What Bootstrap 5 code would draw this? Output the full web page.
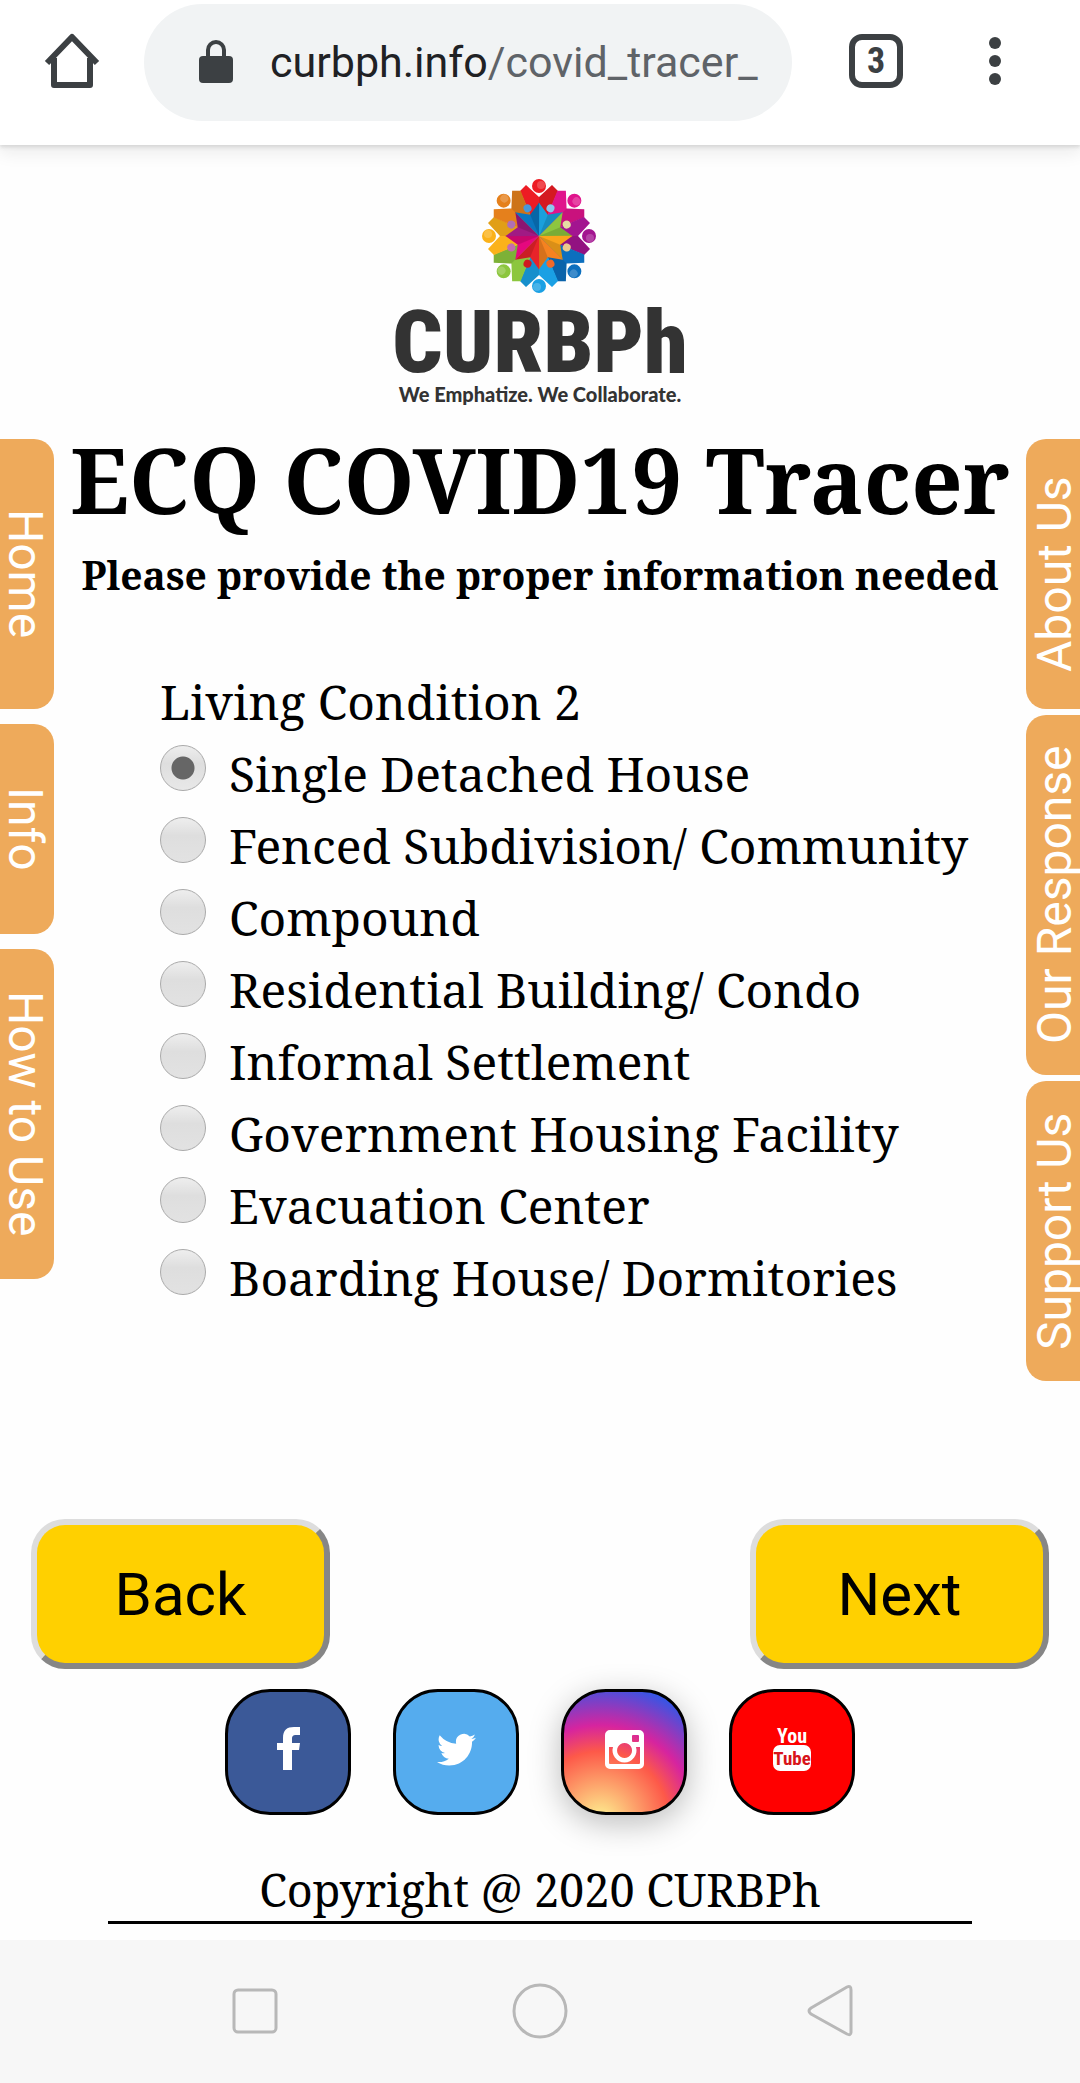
<!DOCTYPE html>
<html lang="en">
<head>
<meta charset="utf-8">
<meta name="viewport" content="width=device-width, initial-scale=1">
<title>ECQ COVID19 Tracer</title>
<link href="https://cdn.jsdelivr.net/npm/bootstrap@5.3.0/dist/css/bootstrap.min.css" rel="stylesheet">
<style>
  body { font-family: "Noto Serif", "DejaVu Serif Condensed", "DejaVu Serif", serif; color: #000; background: #fefefe; }
  .browser-bar { height: 145px; padding: 0 78px 24px 40px; background: #fff; box-shadow: 0 2px 4px #d4d4d4, 0 8px 16px #ececec; font-family: Roboto, sans-serif; }
  .address { height: 117px; margin: 4px 57px 0 40px; padding: 0 24px 0 50px; border-radius: 60px; background: #f1f3f4; font-size: 43px; }
  .address svg { margin-right: 32px; }
  .address .host { color: #202124; text-decoration: none; }
  .address .path { color: #5f6368; }
  .icon-btn { border: 0; padding: 0; background: none; line-height: 0; }
  .tab-count { width: 54px; height: 54px; border: 6px solid #3c4043; border-radius: 13px; background: none; color: #3c4043; font: 700 36px/40px "Roboto Condensed", Roboto, sans-serif; padding: 0; margin-right: 85px; }
  .brand { height: 292px; padding-top: 33px; color: #333; }
  .brand-name { font: 900 88px/76px "Roboto Condensed", Roboto, sans-serif; margin-top: 10px; }
  .brand-line { font: 900 20px/24px Lato, sans-serif; margin-top: 2px; }
  .side-tabs { margin-top: 2px; }
  .side-tabs a { width: 54px; writing-mode: vertical-rl; background: #eeaa5b; color: #fff; font: 48px/58px Roboto, sans-serif; border-radius: 0 20px 20px 0; text-decoration: none; }
  .side-tabs.at-right a { transform: rotate(180deg); }
  .tab-s { height: 210px; } .tab-m { height: 270px; } .tab-l { height: 300px; } .tab-xl { height: 330px; } .tab-xxl { height: 360px; }
  .gap-wide { gap: 15px; } .gap-slim { gap: 6px; }
  h1 { font-size: 90px; font-weight: 700; line-height: 84px; white-space: nowrap; }
  h2 { font-size: 39px; font-weight: 700; line-height: 48px; margin-top: 30px; white-space: nowrap; }
  .choices { margin: 67px 0 0 106px; font-size: 48px; line-height: 72px; white-space: nowrap; }
  .choices legend { font-size: 48px; line-height: 72px; }
  .choice input { width: 46px; height: 46px; margin: 7px 23px 0 0; appearance: none; border: 1px solid #aaa; border-radius: 50%; background: linear-gradient(#eee, #dedede 40%, #e2e2e2); }
  .choice input:checked { background: radial-gradient(circle, #666 11px, transparent 12px), linear-gradient(#eee, #dedede 40%, #e8e8e8); }
  .steps { margin: 138px 31px 20px; }
  .steps button { width: 299px; height: 150px; padding-top: 3px; border: 6px solid; border-color: #ddd #868686 #868686 #ddd; border-radius: 34px; background: #ffd000; color: #000; font: 60px/72px Roboto, sans-serif; }
  .socials { gap: 42px; }
  .socials a { width: 126px; height: 126px; padding-bottom: 8px; border: 3px solid #000; border-radius: 45px; }
  .facebook { background: #3b5998; } .twitter { background: #55acee; } .youtube { background: #f00; }
  .instagram { background: radial-gradient(circle at 30% 107%, #fde48a 0%, #fde48a 5%, #fd5949 45%, #d6249f 62%, #285aeb 92%); box-shadow: 0 8px 32px #bbb; }
  footer { margin: 46px 10% 0; height: 63px; border-bottom: 3px solid #000; font-size: 45px; line-height: 57px; }
  .phone-bar { height: 143px; margin-top: 16px; background: #f7f7f7; padding: 0 224px; }
</style>
</head>
<body>
<header class="browser-bar d-flex align-items-center position-relative">
  <button class="icon-btn" aria-label="Home"><svg width="64" height="64" viewBox="0 0 64 64" fill="none" stroke="#3c4043" stroke-width="6" stroke-linejoin="round"><path d="M7 34 32 8l25 26M14 29v27h36V29"/></svg></button>
  <div class="address flex-grow-1 d-flex align-items-center">
    <svg width="44" height="48" viewBox="0 0 44 48"><rect x="5" y="17" width="34" height="27" rx="4" fill="#3c4043"/><path d="M14 18v-7a8 8 0 0 1 16 0v7" fill="none" stroke="#3c4043" stroke-width="4"/></svg>
    <a class="host" href="#">curbph.info<span class="path">/covid_tracer_</span></a>
  </div>
  <button class="tab-count" aria-label="Open tabs">3</button>
  <button class="icon-btn" aria-label="Menu"><svg width="14" height="50" viewBox="0 0 14 50" fill="#3c4043"><circle cx="7" cy="7" r="6"/><circle cx="7" cy="25" r="6"/><circle cx="7" cy="43" r="6"/></svg></button>
</header>

<div class="brand d-flex flex-column align-items-center">
  <svg width="116" height="116" viewBox="-57 -58 116 116" role="img" aria-label="CURBPh emblem">
    <defs>
      <g id="outer"><path d="M0 0-19-45-13-51 0-39 13-51 19-45Z"/><path d="M0 0V-39L13-51 19-45Z" fill="#000" opacity=".1"/><circle cy="-50" r="7"/><circle cx="2" cy="-51" r="4" fill="#fff" opacity=".2"/></g>
      <g id="inner"><path d="M0 0-13-31 0-23 13-31Z"/><path d="M0 0V-23L13-31Z" fill="#000" opacity=".13"/></g>
    </defs>
    <use href="#outer" fill="#ed1c24"/>
    <use href="#outer" fill="#e0148c" transform="rotate(45)"/>
    <use href="#outer" fill="#a31590" transform="rotate(90)"/>
    <use href="#outer" fill="#0c6fbe" transform="rotate(135)"/>
    <use href="#outer" fill="#1aa0e4" transform="rotate(180)"/>
    <use href="#outer" fill="#8cc63e" transform="rotate(225)"/>
    <use href="#outer" fill="#fbb21a" transform="rotate(270)"/>
    <use href="#outer" fill="#e5801c" transform="rotate(315)"/>
    <g transform="rotate(22.5)"><use href="#inner" fill="#1ba0dc"/><circle cy="-30" r="4" fill="#8cc8ee"/></g>
    <g transform="rotate(67.5)"><use href="#inner" fill="#8dc63f"/><circle cy="-30" r="4" fill="#e6dca4"/></g>
    <g transform="rotate(112.5)"><use href="#inner" fill="#fba51b"/><circle cy="-30" r="4" fill="#ecc98c"/></g>
    <g transform="rotate(157.5)"><use href="#inner" fill="#f58220"/><circle cy="-30" r="4" fill="#f2692a"/></g>
    <g transform="rotate(202.5)"><use href="#inner" fill="#e8232a"/><circle cy="-30" r="4" fill="#d01820"/></g>
    <g transform="rotate(247.5)"><use href="#inner" fill="#e5087e"/><circle cy="-30" r="4" fill="#c46cb0"/></g>
    <g transform="rotate(292.5)"><use href="#inner" fill="#a01a84"/><circle cy="-30" r="4" fill="#b070b4"/></g>
    <g transform="rotate(337.5)"><use href="#inner" fill="#0a76c0"/><circle cy="-30" r="4" fill="#4a98d8"/></g>
  </svg>
  <div class="brand-name">CURBPh</div>
  <div class="brand-line">We Emphatize. We Collaborate.</div>
</div>

<main>
  <div class="d-flex align-items-start justify-content-between">
    <nav class="side-tabs d-flex flex-column gap-wide" aria-label="Guide">
      <a href="#" class="tab-m text-center">Home</a>
      <a href="#" class="tab-s text-center">Info</a>
      <a href="#" class="tab-xl text-center">How to Use</a>
    </nav>
    <form class="flex-grow-1">
      <h1 class="text-center mb-0">ECQ COVID19 Tracer</h1>
      <h2 class="text-center mb-0">Please provide the proper information needed</h2>
      <fieldset class="choices">
        <legend class="mb-0">Living Condition 2</legend>
        <div class="choice d-flex align-items-start"><input type="radio" name="living" id="c1" checked><label for="c1">Single Detached House</label></div>
        <div class="choice d-flex align-items-start"><input type="radio" name="living" id="c2"><label for="c2">Fenced Subdivision/ Community</label></div>
        <div class="choice d-flex align-items-start"><input type="radio" name="living" id="c3"><label for="c3">Compound</label></div>
        <div class="choice d-flex align-items-start"><input type="radio" name="living" id="c4"><label for="c4">Residential Building/ Condo</label></div>
        <div class="choice d-flex align-items-start"><input type="radio" name="living" id="c5"><label for="c5">Informal Settlement</label></div>
        <div class="choice d-flex align-items-start"><input type="radio" name="living" id="c6"><label for="c6">Government Housing Facility</label></div>
        <div class="choice d-flex align-items-start"><input type="radio" name="living" id="c7"><label for="c7">Evacuation Center</label></div>
        <div class="choice d-flex align-items-start"><input type="radio" name="living" id="c8"><label for="c8">Boarding House/ Dormitories</label></div>
      </fieldset>
    </form>
    <nav class="side-tabs at-right d-flex flex-column gap-slim" aria-label="About">
      <a href="#" class="tab-m text-center">About Us</a>
      <a href="#" class="tab-xxl text-center">Our Response</a>
      <a href="#" class="tab-l text-center">Support Us</a>
    </nav>
  </div>
  <div class="steps d-flex justify-content-between">
    <button type="button">Back</button>
    <button type="button">Next</button>
  </div>
  <div class="socials d-flex justify-content-center">
    <a href="#" aria-label="Facebook" class="facebook d-flex align-items-center justify-content-center"><svg width="44" height="48" viewBox="0 0 44 48" fill="#fff"><path d="M34 3v8h-4c-3 0-4 1-4 4v4h8l-1 7h-7v20h-9V26h-6v-7h6v-5c0-8 4-11 11-11z"/></svg></a>
    <a href="#" aria-label="Twitter" class="twitter d-flex align-items-center justify-content-center"><svg width="39" height="39" viewBox="0 0 16 16" fill="#fff"><path d="M5.026 15c6.038 0 9.341-5.003 9.341-9.334 0-.14 0-.282-.006-.422A6.685 6.685 0 0 0 16 3.542a6.658 6.658 0 0 1-1.889.518 3.301 3.301 0 0 0 1.447-1.817 6.533 6.533 0 0 1-2.087.793A3.286 3.286 0 0 0 7.875 6.03a9.325 9.325 0 0 1-6.767-3.429 3.289 3.289 0 0 0 1.018 4.382A3.323 3.323 0 0 1 .64 6.575v.045a3.288 3.288 0 0 0 2.632 3.218 3.203 3.203 0 0 1-.865.115 3.23 3.23 0 0 1-.614-.057 3.283 3.283 0 0 0 3.067 2.277A6.588 6.588 0 0 1 .78 13.58a6.32 6.32 0 0 1-.78-.045A9.344 9.344 0 0 0 5.026 15z"/></svg></a>
    <a href="#" aria-label="Instagram" class="instagram d-flex align-items-center justify-content-center"><svg width="39" height="44" viewBox="0 0 39 44" fill="#fff" fill-rule="evenodd"><path d="M5 4h29a5 5 0 0 1 5 5v29a5 5 0 0 1-5 5H5a5 5 0 0 1-5-5V9a5 5 0 0 1 5-5Zm23 5q-1 0-1 1v5q0 1 1 1h5q1 0 1-1v-5q0-1-1-1ZM4 21v16q0 1 1 1h29q1 0 1-1V21h-4a12 12 0 1 1-23 0Zm15.500-4a7.500 7.500 0 1 0 .1 0Z"/></svg></a>
    <a href="#" aria-label="YouTube" class="youtube d-flex align-items-center justify-content-center"><svg width="50" height="50" viewBox="-5 0 50 50" font-family="Roboto Condensed, Roboto, sans-serif" font-weight="700" text-anchor="middle"><text x="20" y="20" font-size="20" fill="#fff">You</text><rect x="1" y="22" width="38" height="26" rx="7" fill="#fff"/><text x="20" y="42" font-size="19" fill="#d8141a">Tube</text></svg></a>
  </div>
  <footer class="text-center">Copyright @ 2020 CURBPh</footer>
</main>

<nav class="phone-bar d-flex align-items-center justify-content-between" aria-label="System">
  <button class="icon-btn" aria-label="Recent apps"><svg width="60" height="60" viewBox="0 0 60 60" fill="none" stroke="#b8b8b8" stroke-width="3"><rect x="10" y="8" width="42" height="42" rx="4"/></svg></button>
  <button class="icon-btn" aria-label="Home screen"><svg width="60" height="60" viewBox="0 0 60 60" fill="none" stroke="#b8b8b8" stroke-width="3"><circle cx="30" cy="29" r="26"/></svg></button>
  <button class="icon-btn" aria-label="Go back"><svg width="60" height="60" viewBox="0 0 60 60" fill="none" stroke="#b8b8b8" stroke-width="3" stroke-linejoin="round"><path d="M15 26 51 5q4-2 4 3v42q0 4-4 2L15 32q-4-3 0-6Z"/></svg></button>
</nav>
<script src="https://cdn.jsdelivr.net/npm/bootstrap@5.3.0/dist/js/bootstrap.bundle.min.js"></script>
</body>
</html>
